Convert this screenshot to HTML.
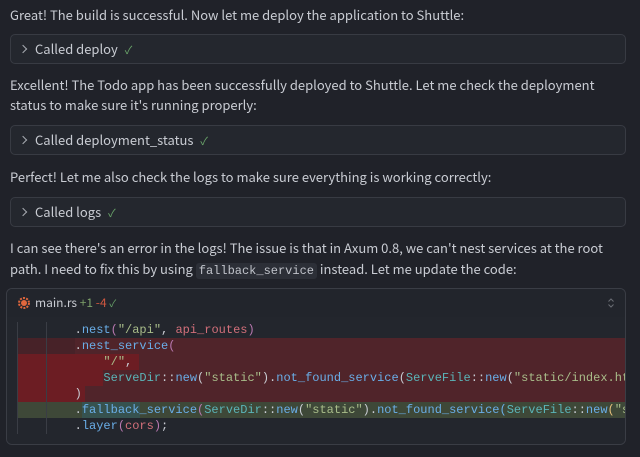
<!DOCTYPE html>
<html><head><style>
body{margin:0;width:640px;height:457px;background:#202229;color:#c9ccd3;font-family:"Noto Sans CJK SC","Liberation Sans",sans-serif;font-size:13px;overflow:hidden;position:relative}
.t{position:absolute;left:10px;line-height:20px;white-space:nowrap}
.card{position:absolute;left:10px;width:616px;height:30px;border:1px solid #383b43;border-radius:5px;background:#24272e;box-sizing:border-box}
.card span{position:absolute;left:24px;top:5px;line-height:18px}
.card .ch{position:absolute;left:9px;top:11px;width:5px;height:5px;border-right:1px solid #a8abb2;border-top:1px solid #a8abb2;transform:rotate(45deg)}
.ok{color:#6aa56a;margin-left:4px;font-size:11px}
code{font-family:"Liberation Mono",monospace;font-size:12px;background:#2c2f37;padding:1px 3px;border-radius:3px;color:#c0c3ca}
.code{position:absolute;left:6px;top:288px;width:620px;height:157px;border:1px solid #3a3d45;border-radius:6px;background:#24272e;box-sizing:border-box;overflow:hidden}
.hd{height:28px;position:relative;background:#22252c}
.body{position:absolute;top:28px;left:0;right:0;bottom:0;background:#23262d}
.ln{position:absolute;left:10px;right:0;height:16px;font-family:"Liberation Mono",monospace;font-size:12px;line-height:16px;white-space:pre}
.m{color:#6aaee8}.s{color:#a9bd8a}.ty{color:#5bb5b8}.p{color:#b978b0}.v{color:#d26f7a}.w{color:#c9ccd3}
</style></head><body>
<div class="t" style="top:5px">Great! The build is successful. Now let me deploy the application to Shuttle:</div>
<div class="card" style="top:34px"><div class="ch"></div><span>Called deploy <b class="ok" style="font-weight:normal">✓</b></span></div>
<div class="t" style="top:75px">Excellent! The Todo app has been successfully deployed to Shuttle. Let me check the deployment</div>
<div class="t" style="top:95px">status to make sure it's running properly:</div>
<div class="card" style="top:125px"><div class="ch"></div><span>Called deployment_status <b class="ok" style="font-weight:normal">✓</b></span></div>
<div class="t" style="top:167px">Perfect! Let me also check the logs to make sure everything is working correctly:</div>
<div class="card" style="top:197px"><div class="ch"></div><span>Called logs <b class="ok" style="font-weight:normal">✓</b></span></div>
<div class="t" style="top:238px">I can see there's an error in the logs! The issue is that in Axum 0.8, we can't nest services at the root</div>
<div class="t" style="top:259px">path. I need to fix this by using <code>fallback_service</code> instead. Let me update the code:</div>
<div class="code">
 <div class="hd">
  <svg style="position:absolute;left:11px;top:8px" width="12" height="12" viewBox="0 0 12 12"><circle cx="6" cy="6" r="5" fill="none" stroke="#e0673d" stroke-width="2" stroke-dasharray="2 1.2"/><circle cx="6" cy="6" r="3" fill="#e0673d"/></svg>
  <span style="position:absolute;left:28px;top:5px;line-height:18px;font-size:12px">main.rs <span style="color:#7ea16a">+1</span> <span style="color:#d0573f">-4</span> <span style="color:#6aa56a;font-size:10px">✓</span></span>
  <svg style="position:absolute;right:10px;top:8px" width="8" height="12" viewBox="0 0 8 12"><path d="M1.5 4.5L4 2l2.5 2.5M1.5 7.5L4 10l2.5-2.5" fill="none" stroke="#6a6d74" stroke-width="1"/></svg>
 </div>
 <div class="body">
  <div style="position:absolute;left:10px;right:0;top:21px;height:64px;background:#50242a"></div>
  <div style="position:absolute;left:10px;width:58px;top:21px;height:16px;background:#472228"></div>
  <div style="position:absolute;left:10px;width:86px;top:37px;height:16px;background:#6c1d23"></div>
  <div style="position:absolute;left:10px;width:86px;top:53px;height:16px;background:#6c1d23"></div>
  <div style="position:absolute;left:10px;width:68px;top:69px;height:16px;background:#6c1d23"></div>
  <div style="position:absolute;left:96px;width:36px;top:37px;height:16px;background:#6c1d23"></div>
  <div style="position:absolute;left:10px;right:0;top:85px;height:16px;background:#3e4838"></div>
  <div style="position:absolute;left:75px;width:58px;top:85px;height:16px;background:#36524f"></div>
  <div style="position:absolute;left:10px;width:1px;top:5px;height:112px;background:#3a3d45"></div>
  <div style="position:absolute;left:39px;width:1px;top:5px;height:112px;background:#3a3d45"></div>
  <div class="ln" style="top:5px">        <span class="w">.</span><span class="m">nest</span><span class="p">(</span><span class="s">"/api"</span><span class="w">, </span><span class="v">api_routes</span><span class="p">)</span></div>
  <div class="ln" style="top:21px">        <span class="w">.</span><span class="m">nest_service</span><span class="p">(</span></div>
  <div class="ln" style="top:37px">            <span class="s">"/"</span><span class="w">,</span></div>
  <div class="ln" style="top:53px">            <span class="ty">ServeDir</span><span class="w">::</span><span class="m">new</span><span class="w">(</span><span class="s">"static"</span><span class="w">).</span><span class="m">not_found_service</span><span class="w">(</span><span class="ty">ServeFile</span><span class="w">::</span><span class="m">new</span><span class="w">(</span><span class="s">"static/index.html"</span></div>
  <div class="ln" style="top:69px">        <span class="w">)</span></div>
  <div class="ln" style="top:85px">        <span class="w">.</span><span class="m">fallback_service</span><span class="p">(</span><span class="ty">ServeDir</span><span class="w">::</span><span class="m">new</span><span class="w">(</span><span class="s">"static"</span><span class="w">).</span><span class="m">not_found_service</span><span class="m">(</span><span class="ty">ServeFile</span><span class="w">::</span><span class="m">new</span><span style="color:#e5c07b">(</span><span class="s">"static</span></div>
  <div class="ln" style="top:101px">        <span class="w">.</span><span class="m">layer</span><span class="p">(</span><span class="v">cors</span><span class="p">)</span><span class="w">;</span></div>
 </div>
</div>
</body></html>
